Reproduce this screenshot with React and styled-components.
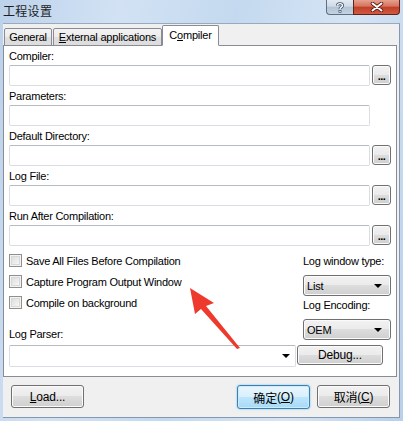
import React from 'react';
import styled, { createGlobalStyle } from 'styled-components';

const GlobalStyle = createGlobalStyle`
  html, body {
    margin: 0;
    padding: 0;
  }
  body {
    font-family: "Liberation Sans", Arial, sans-serif;
    font-size: 11px;
    color: #000;
  }
`;

const fields = [
  { label: 'Compiler:', browse: true },
  { label: 'Parameters:', browse: false },
  { label: 'Default Directory:', browse: true },
  { label: 'Log File:', browse: true },
  { label: 'Run After Compilation:', browse: true },
];

const options = [
  'Save All Files Before Compilation',
  'Capture Program Output Window',
  'Compile on background',
];

export default function App() {
  return (
    <Window>
      <GlobalStyle />
      <TitleBar>
        <Title>工程设置</Title>
        <HelpButton>
          <svg width="10" height="11" viewBox="0 0 10 11">
            <path
              d="M2.5 3.5 C2.5 1 7.5 1 7.5 3.5 C7.5 5.2 5 5.2 5 7"
              fill="none"
              stroke="#3a4b60"
              strokeWidth="3"
            />
            <path
              d="M2.5 3.5 C2.5 1 7.5 1 7.5 3.5 C7.5 5.2 5 5.2 5 7"
              fill="none"
              stroke="#fff"
              strokeWidth="1.4"
            />
            <rect x="3.6" y="8" width="2.8" height="2.6" fill="#3a4b60" />
            <rect x="4.3" y="8.7" width="1.4" height="1.3" fill="#fff" />
          </svg>
        </HelpButton>
        <CloseButton>
          <svg width="14" height="10" viewBox="0 0 14 10">
            <path
              d="M2.5 1.5 L11.5 8.5 M11.5 1.5 L2.5 8.5"
              stroke="#5a1a14"
              strokeWidth="3.6"
              strokeLinecap="round"
            />
            <path
              d="M2.5 1.5 L11.5 8.5 M11.5 1.5 L2.5 8.5"
              stroke="#fff"
              strokeWidth="2"
              strokeLinecap="round"
            />
          </svg>
        </CloseButton>
      </TitleBar>

      <Client>
        <TabStrip>
          <Tab $w={48}>General</Tab>
          <Tab $w={109}>
            <u>E</u>xternal applications
          </Tab>
          <Tab $w={57} $active>
            C<u>o</u>mpiler
          </Tab>
        </TabStrip>

        <Panel>
          {fields.map((f) => (
            <Field key={f.label}>
              <Label>{f.label}</Label>
              <InputRow>
                <TextBox $noBrowse={!f.browse} />
                {f.browse && <BrowseButton>...</BrowseButton>}
              </InputRow>
            </Field>
          ))}

          <Lower>
            <LeftColumn>
              {options.map((o) => (
                <CheckRow key={o}>
                  <CheckBox />
                  <span>{o}</span>
                </CheckRow>
              ))}
              <Label $top={14}>Log Parser:</Label>
            </LeftColumn>
            <RightColumn>
              <Label $top={4}>Log window type:</Label>
              <Select $top={5}>
                List
                <Caret />
              </Select>
              <Label $top={2}>Log Encoding:</Label>
              <Select $top={5}>
                OEM
                <Caret />
              </Select>
            </RightColumn>
          </Lower>

          <ParserRow>
            <Combo>
              <Caret />
            </Combo>
            <Button $w={86} $h={20}>
              Debug...
            </Button>
          </ParserRow>
        </Panel>

        <Footer>
          <Button $w={73} $h={23}>
            <u>L</u>oad...
          </Button>
          <Spacer />
          <Button $w={73} $h={24} $default>
            <Cjk>确定</Cjk>(<u>O</u>)
          </Button>
          <Button $w={73} $h={23}>
            <Cjk>取消</Cjk>(<u>C</u>)
          </Button>
        </Footer>
      </Client>

      <Annotation width="403" height="421" viewBox="0 0 403 421">
        <polygon
          points="190,288 214,303 206,306 240,348 237,349 201,309 195,314"
          fill="#ee3a2c"
        />
      </Annotation>
    </Window>
  );
}

const Window = styled.div`
  position: relative;
  width: 403px;
  height: 421px;
  display: flex;
  flex-direction: column;
  overflow: hidden;
  background: linear-gradient(
    100deg,
    #bcd2eb 0%,
    #d2e2f4 25%,
    #c4d9ef 50%,
    #d6e5f5 75%,
    #b9d0ea 100%
  );
`;

const TitleBar = styled.div`
  height: 23px;
  display: flex;
  align-items: flex-start;
  flex-shrink: 0;
  padding-right: 3px;
`;

const Title = styled.div`
  flex: 1;
  padding-left: 3px;
  line-height: 21px;
  font-family: "Noto Sans CJK SC", sans-serif;
  font-size: 12px;
  letter-spacing: 0.3px;
  color: #1e1e1e;
`;

const HelpButton = styled.span`
  display: inline-flex;
  align-items: center;
  justify-content: center;
  width: 27px;
  height: 15px;
  box-sizing: border-box;
  border: 1px solid #5f6f83;
  border-top: 0;
  border-right: 0;
  border-radius: 0 0 0 4px;
  background: #c3d0df linear-gradient(#e2e9f1, #cfdae6 45%, #b2c2d5 50%, #c5d3e2);
`;

const CloseButton = styled.span`
  display: inline-flex;
  align-items: center;
  justify-content: center;
  width: 47px;
  height: 15px;
  box-sizing: border-box;
  border: 1px solid #5e231b;
  border-top: 0;
  border-radius: 0 0 4px 0;
  background: #c94f3a linear-gradient(#e6a090, #d6735c 45%, #c03e28 50%, #d15a41);
`;

const Client = styled.div`
  flex: 1;
  margin: 0 3px 3px 3px;
  display: flex;
  flex-direction: column;
  background: #f0f0f0;
  border: 1px solid #8497ae;
  border-top-color: #9aa9bb;
  border-left: none;
  padding: 1px 1px 0 0;
`;

const TabStrip = styled.div`
  display: flex;
  align-items: flex-end;
  height: 21px;
  padding-left: 1px;
  margin-bottom: -1px;
  position: relative;
  z-index: 1;
`;

const Tab = styled.div`
  width: ${(p) => p.$w}px;
  box-sizing: border-box;
  height: ${(p) => (p.$active ? 21 : 18)}px;
  margin: ${(p) => (p.$active ? '0 -1px 0 -1px' : '0 1px 0 0')};
  display: flex;
  align-items: center;
  justify-content: center;
  padding-bottom: ${(p) => (p.$active ? 2 : 0)}px;
  border: 1px solid #898c95;
  border-bottom-color: ${(p) => (p.$active ? '#fff' : '#898c95')};
  border-radius: 2px 2px 0 0;
  background: ${(p) =>
    p.$active ? '#fff' : 'linear-gradient(#f3f3f3, #ececec 50%, #e0e0e0 51%, #dcdcdc)'};
  letter-spacing: -0.2px;
  white-space: nowrap;
`;

const Panel = styled.div`
  height: 332px;
  box-sizing: border-box;
  margin-right: 1px;
  padding: 3px 5px 0 5px;
  border: 1px solid #898c95;
  background: #fff;
  display: flex;
  flex-direction: column;
`;

const Field = styled.div`
  margin-bottom: 3px;
`;

const Label = styled.div`
  line-height: 14px;
  height: 14px;
  margin-top: ${(p) => p.$top || 0}px;
  margin-bottom: 2px;
  letter-spacing: -0.25px;
  white-space: nowrap;
`;

const InputRow = styled.div`
  display: flex;
  gap: 2px;
  height: 21px;
`;

const TextBox = styled.div`
  flex: 1;
  margin-right: ${(p) => (p.$noBrowse ? 21 : 0)}px;
  border: 1px solid #dadde3;
  border-top-color: #b5b9c0;
  border-radius: 2px;
  background: #fff;
`;

const buttonFace = `
  border: 1px solid #707070;
  border-radius: 3px;
  background: linear-gradient(#f2f2f2 0%, #ebebeb 48%, #dddddd 50%, #cfcfcf 100%);
  box-shadow: inset 0 0 0 1px #fbfbfb;
`;

const BrowseButton = styled.div`
  width: 19px;
  height: 20px;
  box-sizing: border-box;
  ${buttonFace}
  display: flex;
  align-items: flex-end;
  justify-content: center;
  padding-bottom: 3px;
  font-size: 11px;
  line-height: 10px;
  font-weight: bold;
  letter-spacing: -0.5px;
`;

const Lower = styled.div`
  display: grid;
  grid-template-columns: 1fr 88px;
  margin-top: 1px;
`;

const LeftColumn = styled.div`
  display: flex;
  flex-direction: column;
`;

const RightColumn = styled.div`
  display: flex;
  flex-direction: column;
`;

const CheckRow = styled.div`
  height: 21px;
  display: flex;
  align-items: center;
  gap: 4px;
  letter-spacing: -0.25px;
  white-space: nowrap;
`;

const CheckBox = styled.div`
  width: 13px;
  height: 13px;
  box-sizing: border-box;
  border: 1px solid #8f8f8f;
  background: linear-gradient(135deg, #d6d6d6 0%, #f2f2f2 70%, #fff 100%);
  box-shadow: inset 0 0 0 1px #f4f4f4, inset 0 0 0 2px #d8d8d8;
`;

const Select = styled.div`
  height: 21px;
  margin-top: ${(p) => p.$top}px;
  box-sizing: border-box;
  ${buttonFace}
  display: flex;
  align-items: center;
  padding: 0 8px 0 3px;
  letter-spacing: -0.2px;
  justify-content: space-between;
`;

const Caret = styled.span`
  width: 0;
  height: 0;
  border-left: 4px solid transparent;
  border-right: 4px solid transparent;
  border-top: 4px solid #000;
`;

const ParserRow = styled.div`
  display: flex;
  align-items: flex-start;
  gap: 1px;
  margin-top: 2px;
`;

const Combo = styled.div`
  width: 287px;
  height: 22px;
  box-sizing: border-box;
  border: 1px solid #dadde3;
  border-top-color: #b5b9c0;
  border-radius: 2px;
  background: #fff;
  display: flex;
  align-items: center;
  justify-content: flex-end;
  padding-right: 5px;
`;

const Button = styled.div`
  width: ${(p) => p.$w}px;
  height: ${(p) => p.$h}px;
  box-sizing: border-box;
  ${buttonFace}
  ${(p) =>
    p.$default &&
    `
    border-color: #3c7fb1;
    background: linear-gradient(#eaf6fd 0%, #d9f0fc 48%, #bee6fd 50%, #a7d9f5 100%);
    box-shadow: inset 0 0 0 1px #c9ecff, 0 0 2px #62b7e8;
  `}
  display: flex;
  align-items: center;
  justify-content: center;
  white-space: nowrap;
  font-size: 12px;
  letter-spacing: -0.2px;
`;

const Cjk = styled.span`
  font-family: "Noto Sans CJK SC", sans-serif;
  font-size: 12px;
`;

const Footer = styled.div`
  flex: 1;
  display: flex;
  align-items: flex-start;
  gap: 7px;
  padding: 8px 8px 0 8px;
`;

const Spacer = styled.div`
  flex: 1;
`;

const Annotation = styled.svg`
  position: absolute;
  left: 0;
  top: 0;
  pointer-events: none;
`;
